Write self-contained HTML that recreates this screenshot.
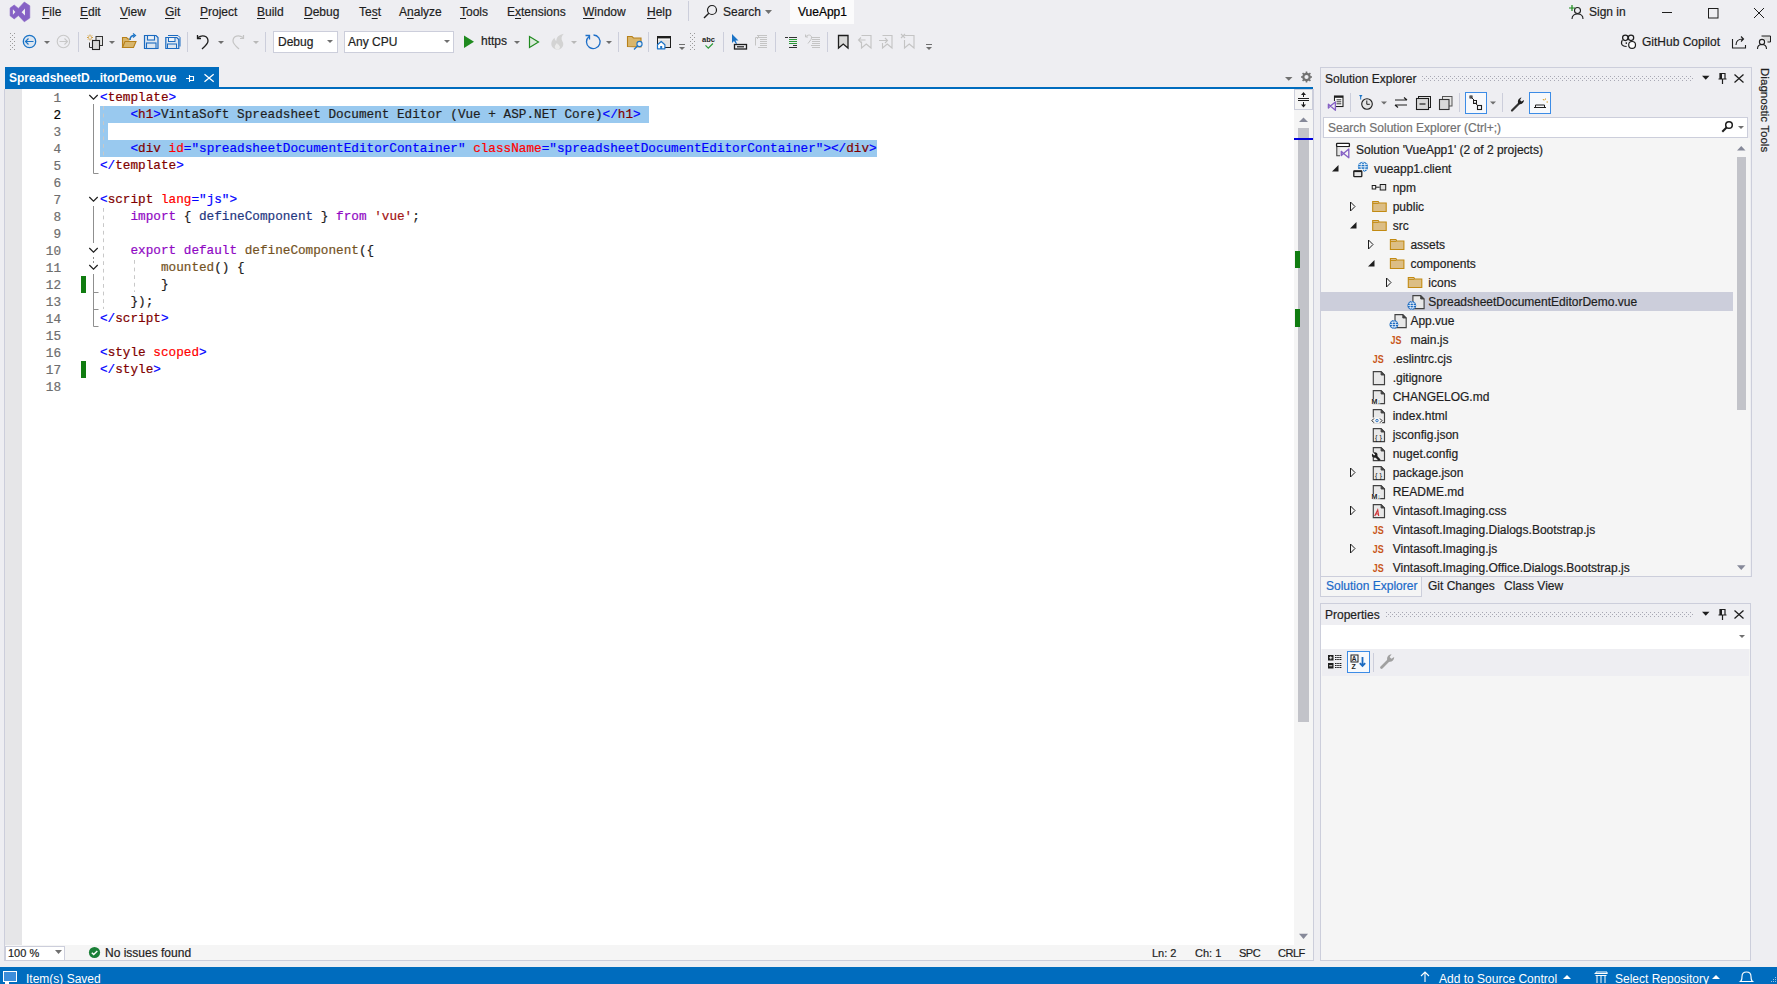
<!DOCTYPE html>
<html><head><meta charset="utf-8"><style>
body{margin:0;width:1777px;height:984px;background:#EEEEF2;position:relative;overflow:hidden;font-family:"Liberation Sans",sans-serif;font-size:12px;color:#1E1E1E;-webkit-text-stroke:0.2px currentColor}
.a{position:absolute}
.m{position:absolute;top:0;height:24px;line-height:24px;white-space:nowrap}
.m u{text-decoration:underline;text-underline-offset:2px}
.sep{position:absolute;width:1px;background:#CCCEDB}
.code{position:absolute;left:0;top:89px;font-family:"Liberation Mono",monospace;font-size:12.69px;line-height:17px;white-space:pre}
.ln{position:absolute;left:22px;width:39px;padding-top:1px;text-align:right;font-family:"Liberation Mono",monospace;font-size:12.69px;line-height:17px;color:#6E6E6E}
.cl{position:absolute;left:100px;height:17px}
.b{color:#0000FF}.t{color:#800000}.r{color:#FF0000}.k{color:#8F08C4}.f{color:#74531F}.v{color:#1F377F}.s{color:#A31515}
.tr{position:absolute;height:19px;line-height:19px;white-space:nowrap}
.st{position:absolute;color:#fff;white-space:nowrap;line-height:17px;-webkit-text-stroke:0}
</style></head><body>

<!-- ============ MENU BAR ============ -->
<div id="menubar">
<svg class="a" style="left:6px;top:0" width="30" height="25" viewBox="0 0 30 25"><path d="M4.1 8.1L8.2 5L12.4 8.4L18.3 2L23.8 5.8V18L18.3 21.8L12.4 15.5L8.2 18.9L4.1 15.8Z" fill="#8661C5" stroke="#8661C5" stroke-width="0.6" stroke-linejoin="round"/><path d="M6.9 9.3L9.4 12L6.9 14.7ZM19 8.6L15.6 12.2L19 15.4Z" fill="#EEEEF2"/></svg>
<div class="m" style="left:42px"><u>F</u>ile</div>
<div class="m" style="left:80px"><u>E</u>dit</div>
<div class="m" style="left:120px"><u>V</u>iew</div>
<div class="m" style="left:165px"><u>G</u>it</div>
<div class="m" style="left:200px"><u>P</u>roject</div>
<div class="m" style="left:257px"><u>B</u>uild</div>
<div class="m" style="left:304px"><u>D</u>ebug</div>
<div class="m" style="left:359px">Te<u>s</u>t</div>
<div class="m" style="left:399px">A<u>n</u>alyze</div>
<div class="m" style="left:460px"><u>T</u>ools</div>
<div class="m" style="left:507px">E<u>x</u>tensions</div>
<div class="m" style="left:583px"><u>W</u>indow</div>
<div class="m" style="left:647px"><u>H</u>elp</div>
<div class="sep" style="left:688px;top:1px;height:20px"></div>
<svg class="a" style="left:703px;top:4px" width="15" height="15" viewBox="0 0 15 15"><circle cx="9" cy="6" r="4.5" fill="none" stroke="#1E1E1E" stroke-width="1.2"/><path d="M5.8 9.2 L1 14" stroke="#1E1E1E" stroke-width="1.4"/></svg>
<div class="m" style="left:723px">Search</div>
<svg class="a" style="left:765px;top:10px" width="7" height="4"><path d="M0 0H7L3.5 4Z" fill="#717171"/></svg>
<div class="a" style="left:790px;top:0;width:64px;height:24px;background:#FBFBFC"></div>
<div class="m" style="left:798px;font-weight:400;color:#000">VueApp1</div>
<svg class="a" style="left:1560px;top:0" width="217" height="24" viewBox="1560 0 217 24"><path d="M1572 5v6M1569 8h6" stroke="#1A8A1A" stroke-width="1.2"/><circle cx="1577.5" cy="10.5" r="3" fill="none" stroke="#1E1E1E" stroke-width="1.1"/><path d="M1572 19c0-3.5 2.5-5 5.5-5s5.5 1.5 5.5 5" fill="none" stroke="#1E1E1E" stroke-width="1.1"/>
<path d="M1662 12.5h10" stroke="#1E1E1E" stroke-width="1"/><rect x="1708.5" y="8.5" width="9.5" height="9.5" fill="none" stroke="#1E1E1E" stroke-width="1"/><path d="M1754 8l10 10M1764 8l-10 10" stroke="#1E1E1E" stroke-width="1"/></svg>
<div class="m" style="left:1589px">Sign in</div>
</div>

<!-- ============ TOOLBAR ============ -->
<div id="toolbar">
<svg class="a" style="left:0;top:0" width="1777" height="60" viewBox="0 0 1777 60">
<g fill="#9A9A9A">
<rect x="10" y="33" width="1" height="1"/><rect x="14" y="33" width="1" height="1"/><rect x="12" y="35" width="1" height="1"/><rect x="10" y="37" width="1" height="1"/><rect x="14" y="37" width="1" height="1"/><rect x="12" y="39" width="1" height="1"/><rect x="10" y="41" width="1" height="1"/><rect x="14" y="41" width="1" height="1"/><rect x="12" y="43" width="1" height="1"/><rect x="10" y="45" width="1" height="1"/><rect x="14" y="45" width="1" height="1"/><rect x="12" y="47" width="1" height="1"/><rect x="10" y="49" width="1" height="1"/><rect x="14" y="49" width="1" height="1"/>
<rect x="690" y="33" width="1" height="1"/><rect x="694" y="33" width="1" height="1"/><rect x="692" y="35" width="1" height="1"/><rect x="690" y="37" width="1" height="1"/><rect x="694" y="37" width="1" height="1"/><rect x="692" y="39" width="1" height="1"/><rect x="690" y="41" width="1" height="1"/><rect x="694" y="41" width="1" height="1"/><rect x="692" y="43" width="1" height="1"/><rect x="690" y="45" width="1" height="1"/><rect x="694" y="45" width="1" height="1"/><rect x="692" y="47" width="1" height="1"/><rect x="690" y="49" width="1" height="1"/><rect x="694" y="49" width="1" height="1"/>
</g>
<!-- separators -->
<g fill="#CCCEDB">
<rect x="78" y="32" width="1" height="20"/><rect x="187" y="32" width="1" height="20"/><rect x="265" y="32" width="1" height="20"/>
<rect x="618" y="32" width="1" height="20"/><rect x="648" y="32" width="1" height="20"/><rect x="723" y="32" width="1" height="20"/><rect x="775" y="32" width="1" height="20"/><rect x="827" y="32" width="1" height="20"/>
</g>
<!-- dropdown arrows -->
<g fill="#6F6F6F">
<path d="M44 41h6l-3 3z"/><path d="M109 41h6l-3 3z"/><path d="M218 41h6l-3 3z"/><path d="M253 41h6l-3 3z" fill="#B8B8B8"/>
<path d="M514 41h6l-3 3z"/><path d="M571 41h6l-3 3z" fill="#B8B8B8"/><path d="M606 41h6l-3 3z"/>
<path d="M679 47h6l-3 3z"/><rect x="679" y="44" width="6" height="1"/>
<path d="M926 47h6l-3 3z"/><rect x="926" y="44" width="6" height="1"/>
</g>
<!-- back -->
<circle cx="29.5" cy="41.5" r="6.2" fill="#DCE6F1" stroke="#1B73C6" stroke-width="1.3"/>
<path d="M25.5 41.5h8M28.5 38.5l-3 3 3 3" fill="none" stroke="#1B73C6" stroke-width="1.2"/>
<circle cx="63.4" cy="41.5" r="6.2" fill="none" stroke="#C8C8C8" stroke-width="1.1"/>
<path d="M59.5 41.5h8M64.5 38.5l3 3-3 3" fill="none" stroke="#C8C8C8" stroke-width="1.1"/>
<!-- new project -->
<path d="M90 34.6v5.8M87.1 37.5h5.8M88 35.5l4 4M92 35.5l-4 4" stroke="#C98A12" stroke-width="0.9"/><circle cx="90" cy="37.5" r="1.3" fill="#EEEEF2"/>
<rect x="96" y="36.5" width="6.5" height="9" fill="#E4E4E4" stroke="#333" stroke-width="1"/>
<rect x="92.5" y="40.5" width="7" height="9" fill="#D8D8D8" stroke="#222" stroke-width="1.1"/>
<path d="M89.5 42.5v5h3" fill="none" stroke="#333" stroke-width="1"/>
<!-- open folder -->
<path d="M122.5 47.5v-10h4l1.5 1.5h3" fill="#D9B66B" stroke="#B7801A" stroke-width="1.1"/>
<path d="M122.5 47.5l2.5-6h11l-2.5 6z" fill="#D9B66B" stroke="#B7801A" stroke-width="1.1"/>
<path d="M130 40c0-3 2-4.5 4.5-4.5" fill="none" stroke="#1B73C6" stroke-width="1.3"/><path d="M133 33.5l2.5 2-2.5 2" fill="none" stroke="#1B73C6" stroke-width="1.2"/>
<!-- save -->
<path d="M144.5 35.5h11.5l2 2v11h-13.5z" fill="#DCE6F1" stroke="#1B6AC0" stroke-width="1.2"/>
<rect x="147.5" y="35.5" width="7" height="4.5" fill="#EEF2F7" stroke="#1B6AC0" stroke-width="1.1"/>
<rect x="146.5" y="43" width="9.5" height="5.5" fill="#DCE6F1" stroke="#1B6AC0" stroke-width="1.1"/>
<!-- save all -->
<path d="M168 35.5h10l2 2v9" fill="none" stroke="#1B6AC0" stroke-width="1"/>
<path d="M165.8 37.5h11l2 2v9h-13z" fill="#DCE6F1" stroke="#1B6AC0" stroke-width="1.2"/>
<rect x="168.5" y="37.5" width="6.5" height="4" fill="#EEF2F7" stroke="#1B6AC0" stroke-width="1"/>
<rect x="167.5" y="44" width="9" height="4.5" fill="#DCE6F1" stroke="#1B6AC0" stroke-width="1"/>
<!-- undo -->
<path d="M198 37.5c4-3 10-2 10 3.5c0 2-2 4.5-6 8" fill="none" stroke="#1E1E1E" stroke-width="1.3"/><path d="M197.5 35v3.5h3.5" fill="none" stroke="#1E1E1E" stroke-width="1.3"/>
<path d="M243 37.5c-4-3-10-2-10 3.5c0 2 2 4.5 6 8" fill="none" stroke="#C4C4C4" stroke-width="1.2"/><path d="M243.5 35v3.5h-3.5" fill="none" stroke="#C4C4C4" stroke-width="1.2"/>
<!-- play -->
<path d="M464 35.5v12.5l10-6.25z" fill="#1F8A1F"/>
<path d="M529.5 36.5v11l9-5.5z" fill="#DCEBDC" stroke="#1F8A1F" stroke-width="1.2"/>
<!-- flame -->
<path d="M557.5 49.6c-3.6 0-6.2-2.6-6.2-5.8c0-2.6 1.6-4.4 3.2-6c0.2 1.6 0.8 2.6 1.8 3.2c0-3.6 2.6-6.4 7.6-7.2c-1.8 1.6-2.6 3.6-2.2 5.6c0.3 1.6 1.6 2.6 1.6 4.6c0 3-2.4 5.6-5.8 5.6z" fill="#D3D3D3"/><path d="M557.8 49.6c-1.8 0-3-1.3-3-2.9c0-1.7 1.4-2.6 2.2-3.8c0.4 1 1 1.6 1.8 1.8c0.2 0.9 1.2 1.4 1.2 2.3c0 1.5-1 2.6-2.2 2.6z" fill="#EBEBEB"/>
<!-- refresh -->
<path d="M589 36.5a6.8 6.8 0 1 0 4.5-1.5" fill="none" stroke="#1E6FC8" stroke-width="1.3"/><path d="M585.5 35.5h4v4" fill="none" stroke="#1E6FC8" stroke-width="1.3"/>
<!-- folder search -->
<path d="M627.5 46.5v-10h4.5l1.5 1.5h7.5v9z" fill="#D9B66B" stroke="#B7801A" stroke-width="1.1"/>
<circle cx="639.5" cy="44" r="2.6" fill="#E6EEF6" stroke="#1B73C6" stroke-width="1.1"/><path d="M637.5 46l-3.5 3.5" stroke="#1B73C6" stroke-width="1.3"/>
<!-- window home -->
<rect x="657.5" y="36.5" width="13" height="11" fill="#E2E2E2" stroke="#1E1E1E" stroke-width="1"/><rect x="658" y="37" width="12" height="1.6" fill="#1E1E1E"/><rect x="658" y="38.6" width="12" height="1.4" fill="#F2F2F2"/>
<path d="M657.5 44.8l3.7-3.3 3.7 3.3v4h-7.4z" fill="#fff" stroke="#1B73C6" stroke-width="1.2" stroke-linejoin="round"/><rect x="660.2" y="46" width="2" height="2.8" fill="#1B73C6"/>
<!-- abc -->
<text x="702" y="41.5" font-family="Liberation Sans" font-size="7.6" font-weight="700" fill="#1E1E1E" textLength="13" lengthAdjust="spacingAndGlyphs">abc</text>
<path d="M705.5 45.3l2.8 2.8 4.6-4.6" fill="none" stroke="#2E9A3A" stroke-width="1.2"/>
<!-- cursor select -->
<path d="M732 34v9l2-2 2 3 1-0.5-1.5-3h3z" fill="#1B73C6"/>
<rect x="734.5" y="44.5" width="12" height="4.5" fill="none" stroke="#1E1E1E" stroke-width="1.3"/><rect x="737" y="46.2" width="7" height="1.2" fill="#1E1E1E"/>
<!-- gray indent -->
<g stroke="#C4C4C4" stroke-width="1"><path d="M758 35.5h9M758 37.5h9M760 39.5h7M760 41.5h7M760 43.5h7M760 45.5h7M758 47.5h9"/><path d="M755.5 45.5v-8h3.5M757 35l2 2-2 2" fill="none"/></g>
<!-- green indent -->
<g stroke-width="1.1"><path d="M785 37.5h3M789 37.5h8" stroke="#333"/><path d="M789 39.5h8M789 41.5h8M789 43.5h8" stroke="#2E9A3A"/><path d="M793 45.5h4M789 47.5h8" stroke="#333"/></g>
<g stroke="#C4C4C4" stroke-width="1"><path d="M812 37.5h8M812 39.5h8M812 41.5h8M812 43.5h8M811 45.5h9M812 47.5h8"/><path d="M806 36.5c3-3 7-1 5 3l-3 4M805.5 34.5v2.5h2.5" fill="none"/></g>
<!-- bookmarks -->
<path d="M838.5 35.5h9.5v12.5l-4.75-4-4.75 4z" fill="#D9D9D9" stroke="#1E1E1E" stroke-width="1.3"/>
<g fill="none" stroke="#C4C4C4" stroke-width="1.1"><path d="M861.5 35.5h9.5v12.5l-4.75-4-4.75 4v-6.5M858.5 40h7M861 37.5l-2.5 2.5 2.5 2.5"/>
<path d="M882.5 35.5h9.5v12.5l-4.75-4-4.75 4v-5M879 40.5h8M885 38l2.5 2.5-2.5 2.5"/>
<path d="M904.5 35.5h9.5v12.5l-4.75-4-4.75 4v-8M901 34l4 4M905 34l-4 4"/></g>
<!-- copilot -->
<g fill="none" stroke="#1E1E1E" stroke-width="1.25"><circle cx="1625.3" cy="37.8" r="2.7"/><circle cx="1631" cy="37.8" r="2.7"/><path d="M1622.4 40.2c-1.3 1.8-1.4 4.6 0.8 5.6c1 0.5 2.2 0.6 3.4 0.7M1626.3 42.3v1.6"/></g>
<circle cx="1632.1" cy="44.9" r="3.4" fill="#fff" stroke="#1E1E1E" stroke-width="1.2"/>
<!-- share -->
<path d="M1732.5 39v9h13v-3" fill="none" stroke="#1E1E1E" stroke-width="1.1"/><path d="M1736 45c0-4 3-6 7-6M1741 36.5l2.5 2.5-2.5 2.5" fill="none" stroke="#1E1E1E" stroke-width="1.1"/>
<!-- feedback -->
<path d="M1761.5 36h9v6h-3" fill="#DADADA" stroke="#1E1E1E" stroke-width="1"/><circle cx="1762" cy="42" r="2.6" fill="#EEEEF2" stroke="#1E1E1E" stroke-width="1.1"/><path d="M1757.5 49c0-3 2-4.5 4.5-4.5s4.5 1.5 4.5 4.5" fill="none" stroke="#1E1E1E" stroke-width="1.1"/>
</svg>
<div class="a" style="left:273px;top:31px;width:63px;height:20px;background:#fff;border:1px solid #CCCEDB"></div>
<div class="a" style="left:278px;top:32px;line-height:20px">Debug</div>
<svg class="a" style="left:327px;top:40px" width="6" height="3"><path d="M0 0h6l-3 3z" fill="#6F6F6F"/></svg>
<div class="a" style="left:344px;top:31px;width:108px;height:20px;background:#fff;border:1px solid #CCCEDB"></div>
<div class="a" style="left:348px;top:32px;line-height:20px">Any CPU</div>
<svg class="a" style="left:444px;top:40px" width="6" height="3"><path d="M0 0h6l-3 3z" fill="#6F6F6F"/></svg>
<div class="a" style="left:481px;top:31px;line-height:20px">https</div>
<div class="a" style="left:1642px;top:32px;line-height:20px;white-space:nowrap">GitHub Copilot</div>

</div>

<!-- ============ EDITOR ============ -->
<div id="editor">
<div class="a" style="left:5px;top:67px;width:214px;height:22px;background:#006CBE"></div>
<div class="a" style="left:5px;top:87px;width:1308px;height:2px;background:#006CBE"></div>
<div class="a" style="left:9px;top:68px;height:21px;line-height:21px;color:#fff;font-weight:700;white-space:nowrap;-webkit-text-stroke:0">SpreadsheetD...itorDemo.vue</div>
<div class="a" style="left:4px;top:89px;width:1310px;height:872px;border:1px solid #CCCEDB;border-top:none;box-sizing:border-box;background:#F5F5F5"></div>
<div class="a" style="left:5px;top:89px;width:1289px;height:856px;background:#fff"></div>
<div class="a" style="left:5px;top:89px;width:17px;height:856px;background:#E6E6E8"></div>
<svg class="a" style="left:180px;top:67px" width="40" height="20" viewBox="180 67 40 20"><path d="M186 78.5h3.5M189.5 75v7M189.5 76.5h4v4h-4" fill="none" stroke="#fff" stroke-width="1.1"/><path d="M204.5 74.2l9.2 7.6M213.7 74.2l-9.2 7.6" stroke="#fff" stroke-width="1.3"/></svg>
<svg class="a" style="left:1280px;top:68px" width="34" height="18" viewBox="1280 68 34 18"><path d="M1285 77h7.5l-3.75 3.8z" fill="#717171"/><circle cx="1306.5" cy="77" r="3.2" fill="none" stroke="#717171" stroke-width="2.2"/><path d="M1306.5 71.5v2M1306.5 80.5v2M1301 77h2M1310 77h2M1302.6 73.1l1.4 1.4M1309 79.5l1.4 1.4M1302.6 80.9l1.4-1.4M1309 74.5l1.4-1.4" stroke="#717171" stroke-width="1.6"/><circle cx="1306.5" cy="77" r="1.2" fill="#EEEEF2"/></svg>
<div class="a" style="left:1294px;top:89px;width:19px;height:21px;border:1px solid #CCCEDB;box-sizing:border-box;background:#F5F5F5"></div>
<svg class="a" style="left:1294px;top:89px" width="20" height="860" viewBox="1294 89 20 860"><path d="M1298 100.5h11M1298 98.5h11" stroke="#1E1E1E" stroke-width="1.1"/><path d="M1303.5 94v3M1303.5 102v3" stroke="#1E1E1E" stroke-width="1"/><path d="M1301 95l2.5-3 2.5 3zM1301 104.5l2.5 3 2.5-3z" fill="#1E1E1E"/>
<path d="M1299 122h9l-4.5-4.6z" fill="#868999"/><rect x="1298" y="128" width="11" height="594" fill="#C2C3C9"/><path d="M1299 933.7h9l-4.5 5.2z" fill="#868999"/>
<rect x="1294" y="138" width="19" height="2" fill="#0000DD"/><rect x="1295" y="251" width="5" height="17" fill="#107C10"/><rect x="1295" y="309" width="5" height="18" fill="#107C10"/></svg>
<div class="a" style="left:5px;top:946px;width:58px;height:13px;background:#fff;border:1px solid #CCCEDB"></div>
<div class="a" style="left:8px;top:946px;line-height:15px;font-size:11px;white-space:nowrap">100 %</div>
<svg class="a" style="left:55px;top:950px" width="7" height="4"><path d="M0 0h7l-3.5 4z" fill="#6F6F6F"/></svg>
<svg class="a" style="left:88px;top:946px" width="13" height="13" viewBox="0 0 13 13"><circle cx="6.5" cy="6.5" r="5.6" fill="#1A7F37"/><path d="M3.8 6.7l1.9 1.9 3.6-3.6" fill="none" stroke="#fff" stroke-width="1.4"/></svg>
<div class="a" style="left:105px;top:946px;line-height:15px;white-space:nowrap">No issues found</div>
<div class="a" style="left:1152px;top:946px;line-height:15px;font-size:11px;white-space:nowrap">Ln: 2</div>
<div class="a" style="left:1195px;top:946px;line-height:15px;font-size:11px;white-space:nowrap">Ch: 1</div>
<div class="a" style="left:1239px;top:946px;line-height:15px;font-size:11px;letter-spacing:-0.5px;white-space:nowrap">SPC</div>
<div class="a" style="left:1278px;top:946px;line-height:15px;font-size:11px;letter-spacing:-0.5px;white-space:nowrap">CRLF</div>
<div class="a" style="left:100px;top:106px;width:549px;height:17px;background:#99C9EF"></div>
<div class="a" style="left:100px;top:123px;width:8px;height:17px;background:#99C9EF"></div>
<div class="a" style="left:100px;top:140px;width:777px;height:17px;background:#99C9EF"></div>
<div class="ln" style="top:89px;color:#6E6E6E">1</div>
<div class="ln" style="top:106px;color:#000">2</div>
<div class="ln" style="top:123px;color:#6E6E6E">3</div>
<div class="ln" style="top:140px;color:#6E6E6E">4</div>
<div class="ln" style="top:157px;color:#6E6E6E">5</div>
<div class="ln" style="top:174px;color:#6E6E6E">6</div>
<div class="ln" style="top:191px;color:#6E6E6E">7</div>
<div class="ln" style="top:208px;color:#6E6E6E">8</div>
<div class="ln" style="top:225px;color:#6E6E6E">9</div>
<div class="ln" style="top:242px;color:#6E6E6E">10</div>
<div class="ln" style="top:259px;color:#6E6E6E">11</div>
<div class="ln" style="top:276px;color:#6E6E6E">12</div>
<div class="ln" style="top:293px;color:#6E6E6E">13</div>
<div class="ln" style="top:310px;color:#6E6E6E">14</div>
<div class="ln" style="top:327px;color:#6E6E6E">15</div>
<div class="ln" style="top:344px;color:#6E6E6E">16</div>
<div class="ln" style="top:361px;color:#6E6E6E">17</div>
<div class="ln" style="top:378px;color:#6E6E6E">18</div>
<div class="cl code" style="left:100px;top:89px"><span class="b">&lt;</span><span class="t">template</span><span class="b">&gt;</span></div>
<div class="cl code" style="left:100px;top:106px">    <span class="b">&lt;</span><span class="t">h1</span><span class="b">&gt;</span>VintaSoft Spreadsheet Document Editor (Vue + ASP.NET Core)<span class="b">&lt;/</span><span class="t">h1</span><span class="b">&gt;</span></div>
<div class="cl code" style="left:100px;top:123px"></div>
<div class="cl code" style="left:100px;top:140px">    <span class="b">&lt;</span><span class="t">div</span> <span class="r">id</span><span class="b">="spreadsheetDocumentEditorContainer"</span> <span class="r">className</span><span class="b">="spreadsheetDocumentEditorContainer"</span><span class="b">&gt;&lt;/</span><span class="t">div</span><span class="b">&gt;</span></div>
<div class="cl code" style="left:100px;top:157px"><span class="b">&lt;/</span><span class="t">template</span><span class="b">&gt;</span></div>
<div class="cl code" style="left:100px;top:174px"></div>
<div class="cl code" style="left:100px;top:191px"><span class="b">&lt;</span><span class="t">script</span> <span class="r">lang</span><span class="b">="js"</span><span class="b">&gt;</span></div>
<div class="cl code" style="left:100px;top:208px">    <span class="k">import</span> { <span class="v">defineComponent</span> } <span class="k">from</span> <span class="s">'vue'</span>;</div>
<div class="cl code" style="left:100px;top:225px"></div>
<div class="cl code" style="left:100px;top:242px">    <span class="k">export</span> <span class="k">default</span> <span class="f">defineComponent</span>({</div>
<div class="cl code" style="left:100px;top:259px">        <span class="f">mounted</span>() {</div>
<div class="cl code" style="left:100px;top:276px">        }</div>
<div class="cl code" style="left:100px;top:293px">    });</div>
<div class="cl code" style="left:100px;top:310px"><span class="b">&lt;/</span><span class="t">script</span><span class="b">&gt;</span></div>
<div class="cl code" style="left:100px;top:327px"></div>
<div class="cl code" style="left:100px;top:344px"><span class="b">&lt;</span><span class="t">style</span> <span class="r">scoped</span><span class="b">&gt;</span></div>
<div class="cl code" style="left:100px;top:361px"><span class="b">&lt;/</span><span class="t">style</span><span class="b">&gt;</span></div>
<div class="cl code" style="left:100px;top:378px"></div>
<div class="a" style="left:81px;top:276px;width:5px;height:17px;background:#107C10"></div>
<div class="a" style="left:81px;top:361px;width:5px;height:17px;background:#107C10"></div>
<svg class="a" style="left:0;top:0" width="200" height="400" viewBox="0 0 200 400"><path d="M89.3 95l4.2 4.2 4.2-4.2" fill="none" stroke="#1E1E1E" stroke-width="1.2"/><path d="M89.3 197l4.2 4.2 4.2-4.2" fill="none" stroke="#1E1E1E" stroke-width="1.2"/><path d="M89.3 248l4.2 4.2 4.2-4.2" fill="none" stroke="#1E1E1E" stroke-width="1.2"/><path d="M89.3 265l4.2 4.2 4.2-4.2" fill="none" stroke="#1E1E1E" stroke-width="1.2"/><path d="M93.5 104v69.5h5" fill="none" stroke="#8F8F8F" stroke-width="1"/><path d="M93.5 206v37" fill="none" stroke="#8F8F8F" stroke-width="1"/><path d="M93.5 257v6" fill="none" stroke="#8F8F8F" stroke-width="1" stroke-dasharray="2 2"/><path d="M93.5 274v52.5h5M93.5 292.5h5M93.5 309.5h5" fill="none" stroke="#8F8F8F" stroke-width="1"/><path d="M103.5 106v51M103.5 208v101M134.5 260v32" fill="none" stroke="#C8C8C8" stroke-width="1" stroke-dasharray="3.8 3.8"/></svg>
</div>

<!-- ============ SOLUTION EXPLORER ============ -->
<div id="se">
<div class="a" style="left:1320px;top:67px;width:430px;height:509px;border:1px solid #CCCEDB;border-bottom:none;background:#EEEEF2"></div>
<div class="a" style="left:1321px;top:138px;width:429px;height:438px;background:#F5F5F5"></div>
<div class="a" style="left:1320px;top:576px;width:431px;height:1px;background:#CCCEDB"></div>
<div class="a" style="left:1325px;top:69px;line-height:21px;white-space:nowrap">Solution Explorer</div>
<svg class="a" style="left:1422px;top:76px" width="272" height="5"><defs><pattern id="gp" width="4" height="4" patternUnits="userSpaceOnUse"><rect x="0" y="0" width="1" height="1" fill="#A8A8B4"/><rect x="2" y="2" width="1" height="1" fill="#A8A8B4"/></pattern></defs><rect width="272" height="5" fill="url(#gp)"/></svg>
<svg class="a" style="left:1700px;top:70px" width="50" height="16" viewBox="1700 70 50 16"><path d="M1702 75.7h7.5l-3.75 4z" fill="#1E1E1E"/><path d="M1720 73.5h5v5.5h-5zM1718.5 79h8M1722.5 79v5" fill="none" stroke="#1E1E1E" stroke-width="1.2"/><rect x="1720" y="73.5" width="2" height="5.5" fill="#1E1E1E"/><path d="M1734.5 74.5l9 8M1743.5 74.5l-9 8" stroke="#1E1E1E" stroke-width="1.3"/></svg>
<svg class="a" style="left:1320px;top:88px" width="240" height="30" viewBox="1320 88 240 30"><rect x="1465.5" y="92.5" width="21" height="21" fill="#F7F9FC" stroke="#3C8CE6" stroke-width="1"/><rect x="1529.5" y="92.5" width="21" height="21" fill="#F7F9FC" stroke="#3C8CE6" stroke-width="1"/><rect x="1350" y="93" width="1" height="19" fill="#CCCEDB"/><rect x="1459" y="93" width="1" height="19" fill="#CCCEDB"/><rect x="1502" y="93" width="1" height="19" fill="#CCCEDB"/><rect x="1334.5" y="96" width="8.5" height="10.5" fill="#fff" stroke="#1E1E1E" stroke-width="1.1"/><rect x="1334.5" y="96" width="8.5" height="1.8" fill="#1E1E1E"/><path d="M1336.5 99.8h4.8M1336.5 101.8h4.8M1336.5 103.8h4.8" stroke="#1E1E1E" stroke-width="0.9"/><rect x="1327" y="101" width="9" height="10" fill="#EEEEF2"/><path d="M1328.4 104.2l2 1.9 5-4.2v8.3l-5-4.1-2 1.9z" fill="none" stroke="#8661C5" stroke-width="1.35" stroke-linejoin="round"/><path d="M1359 95h3.5l-1.75 2.5z" fill="#1B73C6"/><path d="M1360.7 96.5v3" stroke="#1B73C6" stroke-width="1"/><circle cx="1367" cy="104" r="5.3" fill="#E6E6E6" stroke="#1E1E1E" stroke-width="1.1"/><path d="M1366.8 100.5v3.8h3" fill="none" stroke="#1E1E1E" stroke-width="1"/><path d="M1381 101.5h6l-3 3z" fill="#6F6F6F"/><path d="M1395 100h12M1404 97.5l3 2.5M1407 105h-12M1398 107.5l-3-2.5" fill="none" stroke="#1E1E1E" stroke-width="1.2"/><rect x="1418.5" y="96.5" width="12" height="11" fill="#E6E6E6" stroke="#1E1E1E" stroke-width="1"/><rect x="1416.5" y="98.5" width="12" height="11" fill="#D9D9D9" stroke="#1E1E1E" stroke-width="1.1"/><path d="M1419.5 104h6" stroke="#1E1E1E" stroke-width="1.2"/><rect x="1442.5" y="96.5" width="9.5" height="9.5" fill="#E6E6E6" stroke="#555" stroke-width="1"/><rect x="1439.5" y="99.5" width="9.5" height="10" fill="#D9D9D9" stroke="#333" stroke-width="1.1"/><path d="M1471.5 97.5l3 3M1475 102.5l2.5 3" stroke="#1E1E1E" stroke-width="1"/><rect x="1470" y="96" width="2" height="2" fill="none" stroke="#1E1E1E" stroke-width="1"/><rect x="1473.5" y="100.5" width="3" height="3" fill="none" stroke="#1E1E1E" stroke-width="1"/><rect x="1477.5" y="105.5" width="4" height="4" fill="none" stroke="#1E1E1E" stroke-width="1.1"/><path d="M1490 101.5h6l-3 3z" fill="#6F6F6F"/><path d="M1512 110.5l7-7" stroke="#333" stroke-width="2.2" stroke-linecap="round"/><path d="M1518.5 104c-1.5-2.5 0-6 3-6.5l-1.5 2.5 1.5 1.5 2.5-1.5c0 3-3 5-5.5 4z" fill="#1E1E1E"/><path d="M1534 107.5h12M1535.5 107.5v-2.5h9v2.5" fill="none" stroke="#1E1E1E" stroke-width="1"/><path d="M1543 99l1 1.5M1546.5 102h1.5M1545.5 98.5l-0.5 1.5" stroke="#D89A1A" stroke-width="1"/></svg>
<div class="a" style="left:1323px;top:117px;width:423px;height:19px;background:#fff;border:1px solid #CCCEDB"></div>
<div class="a" style="left:1328px;top:119px;line-height:19px;color:#717171;white-space:nowrap">Search Solution Explorer (Ctrl+;)</div>
<svg class="a" style="left:1718px;top:119px" width="30" height="16" viewBox="1718 119 30 16"><circle cx="1729" cy="125" r="3.3" fill="none" stroke="#1E1E1E" stroke-width="1.5"/><path d="M1726.8 127.3l-4.5 4.5" stroke="#1E1E1E" stroke-width="2"/><path d="M1738 126h6l-3 3z" fill="#6F6F6F"/></svg>
<svg class="a" style="left:1735px;top:140px" width="14" height="436" viewBox="1735 140 14 436"><path d="M1737 150.5h8.5l-4.25-4.5z" fill="#868999"/><rect x="1737" y="157" width="9" height="253" fill="#C2C3C9"/><path d="M1737 565.2h8.5l-4.25 4.8z" fill="#868999"/></svg>
<div class="a" style="left:1321px;top:292px;width:412px;height:19px;background:#CCCEDB"></div>
<div class="tr" style="left:1356px;top:141px">Solution &#39;VueApp1&#39; (2 of 2 projects)</div>
<div class="tr" style="left:1374px;top:160px">vueapp1.client</div>
<div class="tr" style="left:1392.7px;top:179px">npm</div>
<div class="tr" style="left:1392.7px;top:198px">public</div>
<div class="tr" style="left:1392.7px;top:217px">src</div>
<div class="tr" style="left:1410.4px;top:236px">assets</div>
<div class="tr" style="left:1410.4px;top:255px">components</div>
<div class="tr" style="left:1428.3px;top:274px">icons</div>
<div class="tr" style="left:1428.3px;top:293px">SpreadsheetDocumentEditorDemo.vue</div>
<div class="tr" style="left:1410.4px;top:312px">App.vue</div>
<div class="tr" style="left:1410.4px;top:331px">main.js</div>
<div class="tr" style="left:1392.7px;top:350px">.eslintrc.cjs</div>
<div class="tr" style="left:1392.7px;top:369px">.gitignore</div>
<div class="tr" style="left:1392.7px;top:388px">CHANGELOG.md</div>
<div class="tr" style="left:1392.7px;top:407px">index.html</div>
<div class="tr" style="left:1392.7px;top:426px">jsconfig.json</div>
<div class="tr" style="left:1392.7px;top:445px">nuget.config</div>
<div class="tr" style="left:1392.7px;top:464px">package.json</div>
<div class="tr" style="left:1392.7px;top:483px">README.md</div>
<div class="tr" style="left:1392.7px;top:502px">Vintasoft.Imaging.css</div>
<div class="tr" style="left:1392.7px;top:521px">Vintasoft.Imaging.Dialogs.Bootstrap.js</div>
<div class="tr" style="left:1392.7px;top:540px">Vintasoft.Imaging.js</div>
<div class="tr" style="left:1392.7px;top:559px">Vintasoft.Imaging.Office.Dialogs.Bootstrap.js</div>
<svg class="a" style="left:1320px;top:138px" width="420" height="440" viewBox="1320 138 420 440"><rect x="1336.6" y="143.3" width="12.8" height="3.4" rx="0.8" fill="#fff" stroke="#1E1E1E" stroke-width="1.3"/><rect x="1337.2" y="147.0" width="11.6" height="8.4" fill="#E6E6E6"/><path d="M1336.8 146.7v9h3.2" fill="none" stroke="#424242" stroke-width="1.1"/><rect x="1340.2" y="148.1" width="10" height="9.4" fill="#F5F5F5"/><path d="M1341.3 151.3l2.2 2.1 5.3-4.5v8.8l-5.3-4.3-2.2 2.1z" fill="none" stroke="#8661C5" stroke-width="1.35" stroke-linejoin="round"/><path d="M1332 171.5h6.5v-6.5z" fill="#1E1E1E"/><circle cx="1363" cy="166.8" r="5.1" fill="#1B73C6"/><path d="M1358.3 166.8h9.4M1359 164.3h8M1359 169.3h8" stroke="#fff" stroke-width="0.9"/><ellipse cx="1363" cy="166.8" rx="2" ry="5" fill="none" stroke="#fff" stroke-width="0.8"/><rect x="1352.4" y="169.1" width="10.6" height="8.4" fill="#F5F5F5"/><rect x="1353.8" y="170.8" width="8" height="5.8" rx="0.6" fill="#E6E6E6" stroke="#1E1E1E" stroke-width="1.3"/><rect x="1353.8" y="170.6" width="8" height="1.5" fill="#1E1E1E"/><rect x="1372.2" y="185.5" width="3.5" height="3.5" fill="none" stroke="#1E1E1E" stroke-width="1"/><path d="M1375.7 187.2h4" stroke="#1E1E1E" stroke-width="1"/><rect x="1380.2" y="184.5" width="5.5" height="5.5" fill="#E0E0E0" stroke="#1E1E1E" stroke-width="1"/><path d="M1350.5 202.0l4.5 4.5-4.5 4.5z" fill="none" stroke="#1E1E1E" stroke-width="1"/><path d="M1372.7 201.5h5.5l1 1.5h7v8.5h-13.5z" fill="#DCBE85" stroke="#C28A12" stroke-width="1.1"/><path d="M1372.7 203.5h6" stroke="#C28A12" stroke-width="0.9"/><path d="M1350 228.5h6.5v-6.5z" fill="#1E1E1E"/><path d="M1372.7 220.5h5.5l1 1.5h7v8.5h-13.5z" fill="#DCBE85" stroke="#C28A12" stroke-width="1.1"/><path d="M1372.7 222.5h6" stroke="#C28A12" stroke-width="0.9"/><path d="M1368.5 240.0l4.5 4.5-4.5 4.5z" fill="none" stroke="#1E1E1E" stroke-width="1"/><path d="M1390.4 239.5h5.5l1 1.5h7v8.5h-13.5z" fill="#DCBE85" stroke="#C28A12" stroke-width="1.1"/><path d="M1390.4 241.5h6" stroke="#C28A12" stroke-width="0.9"/><path d="M1368 266.5h6.5v-6.5z" fill="#1E1E1E"/><path d="M1390.4 258.5h5.5l1 1.5h7v8.5h-13.5z" fill="#DCBE85" stroke="#C28A12" stroke-width="1.1"/><path d="M1390.4 260.5h6" stroke="#C28A12" stroke-width="0.9"/><path d="M1386.5 278.0l4.5 4.5-4.5 4.5z" fill="none" stroke="#1E1E1E" stroke-width="1"/><path d="M1408.3 277.5h5.5l1 1.5h7v8.5h-13.5z" fill="#DCBE85" stroke="#C28A12" stroke-width="1.1"/><path d="M1408.3 279.5h6" stroke="#C28A12" stroke-width="0.9"/><path d="M1412.8999999999999 295.6h7.8l3.4 3.4v9.6h-11.2z" fill="#E8E8E8" stroke="#424242" stroke-width="1.15" stroke-linejoin="miter"/><path d="M1420.6999999999998 295.6v3.4h3.4z" fill="#424242" stroke="#424242" stroke-width="0.9"/><circle cx="1411.8" cy="305.5" r="4.4" fill="#1B6AC0"/><path d="M1407.8 305.5h8M1408.8 303.3h6M1408.8 307.7h6" stroke="#fff" stroke-width="0.7"/><ellipse cx="1411.8" cy="305.5" rx="1.7" ry="3.8" fill="none" stroke="#fff" stroke-width="0.7"/><path d="M1395.0 314.6h7.8l3.4 3.4v9.6h-11.2z" fill="#E8E8E8" stroke="#424242" stroke-width="1.15" stroke-linejoin="miter"/><path d="M1402.8 314.6v3.4h3.4z" fill="#424242" stroke="#424242" stroke-width="0.9"/><circle cx="1393.9" cy="324.5" r="4.4" fill="#1B6AC0"/><path d="M1389.9 324.5h8M1390.9 322.3h6M1390.9 326.7h6" stroke="#fff" stroke-width="0.7"/><ellipse cx="1393.9" cy="324.5" rx="1.7" ry="3.8" fill="none" stroke="#fff" stroke-width="0.7"/><text x="1390.4" y="343.5" font-family="Liberation Sans" font-size="11" font-weight="700" fill="#C8571A" textLength="11" lengthAdjust="spacingAndGlyphs">JS</text><text x="1372.7" y="362.5" font-family="Liberation Sans" font-size="11" font-weight="700" fill="#C8571A" textLength="11" lengthAdjust="spacingAndGlyphs">JS</text><path d="M1373.3 371.6h7.8l3.4 3.4v9.6h-11.2z" fill="#E8E8E8" stroke="#424242" stroke-width="1.15" stroke-linejoin="miter"/><path d="M1381.1 371.6v3.4h3.4z" fill="#424242" stroke="#424242" stroke-width="0.9"/><path d="M1373.3 390.6h7.8l3.4 3.4v9.6h-11.2z" fill="#E8E8E8" stroke="#424242" stroke-width="1.15" stroke-linejoin="miter"/><path d="M1381.1 390.6v3.4h3.4z" fill="#424242" stroke="#424242" stroke-width="0.9"/><rect x="1371.2" y="399.0" width="9" height="5.5" fill="#F5F5F5"/><text x="1371.4" y="404.1" font-family="Liberation Sans" font-size="7" font-weight="700" fill="#1E1E1E" textLength="9.5" lengthAdjust="spacingAndGlyphs">M↓</text><path d="M1373.3 409.6h7.8l3.4 3.4v9.6h-11.2z" fill="#E8E8E8" stroke="#424242" stroke-width="1.15" stroke-linejoin="miter"/><path d="M1381.1 409.6v3.4h3.4z" fill="#424242" stroke="#424242" stroke-width="0.9"/><rect x="1371.2" y="417.5" width="11" height="6" fill="#F5F5F5"/><path d="M1373.9 418.5l-2 2.1 2 2.1M1380.0 418.5l2 2.1-2 2.1" fill="none" stroke="#1E1E1E" stroke-width="1"/><circle cx="1377.0" cy="420.6" r="1.2" fill="none" stroke="#1B6AC0" stroke-width="0.9"/><path d="M1373.3 428.6h7.8l3.4 3.4v9.6h-11.2z" fill="#E8E8E8" stroke="#424242" stroke-width="1.15" stroke-linejoin="miter"/><path d="M1381.1 428.6v3.4h3.4z" fill="#424242" stroke="#424242" stroke-width="0.9"/><text x="1375.0" y="439.5" font-family="Liberation Sans" font-size="7.5" fill="#1E1E1E" textLength="7" lengthAdjust="spacingAndGlyphs">{ }</text><path d="M1373.3 447.6h7.8l3.4 3.4v9.6h-11.2z" fill="#E8E8E8" stroke="#424242" stroke-width="1.15" stroke-linejoin="miter"/><path d="M1381.1 447.6v3.4h3.4z" fill="#424242" stroke="#424242" stroke-width="0.9"/><path d="M1375.2 455.5l4.5 4.8" stroke="#1E1E1E" stroke-width="2.4"/><circle cx="1374.7" cy="455.0" r="2.8" fill="#1E1E1E"/><path d="M1372.2 452.5l2.5 2.5" stroke="#F5F5F5" stroke-width="1.6"/><path d="M1350.5 468.0l4.5 4.5-4.5 4.5z" fill="none" stroke="#1E1E1E" stroke-width="1"/><path d="M1373.3 466.6h7.8l3.4 3.4v9.6h-11.2z" fill="#E8E8E8" stroke="#424242" stroke-width="1.15" stroke-linejoin="miter"/><path d="M1381.1 466.6v3.4h3.4z" fill="#424242" stroke="#424242" stroke-width="0.9"/><text x="1375.0" y="477.5" font-family="Liberation Sans" font-size="7.5" fill="#1E1E1E" textLength="7" lengthAdjust="spacingAndGlyphs">{ }</text><path d="M1373.3 485.6h7.8l3.4 3.4v9.6h-11.2z" fill="#E8E8E8" stroke="#424242" stroke-width="1.15" stroke-linejoin="miter"/><path d="M1381.1 485.6v3.4h3.4z" fill="#424242" stroke="#424242" stroke-width="0.9"/><rect x="1371.2" y="494.0" width="9" height="5.5" fill="#F5F5F5"/><text x="1371.4" y="499.1" font-family="Liberation Sans" font-size="7" font-weight="700" fill="#1E1E1E" textLength="9.5" lengthAdjust="spacingAndGlyphs">M↓</text><path d="M1350.5 506.0l4.5 4.5-4.5 4.5z" fill="none" stroke="#1E1E1E" stroke-width="1"/><path d="M1373.3 504.6h7.8l3.4 3.4v9.6h-11.2z" fill="#E8E8E8" stroke="#424242" stroke-width="1.15" stroke-linejoin="miter"/><path d="M1381.1 504.6v3.4h3.4z" fill="#424242" stroke="#424242" stroke-width="0.9"/><path d="M1374.7 516.0l3-6 1 6M1375.7 514.0h3" fill="none" stroke="#D13438" stroke-width="1.2"/><text x="1372.7" y="533.5" font-family="Liberation Sans" font-size="11" font-weight="700" fill="#C8571A" textLength="11" lengthAdjust="spacingAndGlyphs">JS</text><path d="M1350.5 544.0l4.5 4.5-4.5 4.5z" fill="none" stroke="#1E1E1E" stroke-width="1"/><text x="1372.7" y="552.5" font-family="Liberation Sans" font-size="11" font-weight="700" fill="#C8571A" textLength="11" lengthAdjust="spacingAndGlyphs">JS</text><text x="1372.7" y="571.5" font-family="Liberation Sans" font-size="11" font-weight="700" fill="#C8571A" textLength="11" lengthAdjust="spacingAndGlyphs">JS</text></svg>
<div class="a" style="left:1320px;top:577px;width:100px;height:19px;background:#F5F5F5;border:1px solid #CCCEDB;border-top:none"></div>
<div class="a" style="left:1326px;top:577px;line-height:18px;color:#1B6AC9;white-space:nowrap">Solution Explorer</div>
<div class="a" style="left:1428px;top:577px;line-height:18px;color:#1E1E1E;white-space:nowrap">Git Changes</div>
<div class="a" style="left:1504px;top:577px;line-height:18px;color:#1E1E1E;white-space:nowrap">Class View</div>
<div class="a" style="left:1320px;top:603px;width:429px;height:356px;border:1px solid #CCCEDB;background:#F5F5F5"></div>
<div class="a" style="left:1321px;top:604px;width:429px;height:21px;background:#EEEEF2"></div>
<div class="a" style="left:1325px;top:605px;line-height:21px;white-space:nowrap">Properties</div>
<svg class="a" style="left:1386px;top:612px" width="308" height="5"><rect width="308" height="5" fill="url(#gp)"/></svg>
<svg class="a" style="left:1700px;top:606px" width="50" height="16" viewBox="1700 606 50 16"><path d="M1702 611.7h7.5l-3.75 4z" fill="#1E1E1E"/><path d="M1720 609.5h5v5.5h-5zM1718.5 615h8M1722.5 615v5" fill="none" stroke="#1E1E1E" stroke-width="1.2"/><rect x="1720" y="609.5" width="2" height="5.5" fill="#1E1E1E"/><path d="M1734.5 610.5l9 8M1743.5 610.5l-9 8" stroke="#1E1E1E" stroke-width="1.3"/></svg>
<div class="a" style="left:1321px;top:625px;width:429px;height:24px;background:#fff"></div>
<svg class="a" style="left:1738px;top:634px" width="8" height="5"><path d="M1 1h6l-3 3z" fill="#6F6F6F"/></svg>
<div class="a" style="left:1322px;top:649px;width:427px;height:27px;background:#EEEEF2"></div>
<svg class="a" style="left:1320px;top:649px" width="80" height="27" viewBox="1320 649 80 27"><rect x="1347.5" y="651.5" width="22" height="21" fill="#F7F9FC" stroke="#3C8CE6" stroke-width="1"/><rect x="1373" y="653" width="1" height="19" fill="#CCCEDB"/><rect x="1328" y="655" width="5.5" height="5.5" fill="#1E1E1E"/><path d="M1329.2 657.75h3.1M1330.75 656.2v3.1" stroke="#fff" stroke-width="0.9"/><rect x="1328" y="663" width="5.5" height="5.5" fill="#1E1E1E"/><path d="M1329.2 665.75h3.1" stroke="#fff" stroke-width="0.9"/><path d="M1335 655.5h7M1335 657.5h7M1335 659.5h7M1335 663.5h7M1335 665.5h7M1335 667.5h7" stroke="#1E1E1E" stroke-width="1" stroke-dasharray="1.6 0.6"/><rect x="1351" y="655" width="7" height="7" fill="none" stroke="#1E1E1E" stroke-width="1"/><text x="1351.8" y="661" font-family="Liberation Sans" font-size="6.5" font-weight="700" fill="#1E1E1E">A</text><text x="1351.5" y="668.5" font-family="Liberation Sans" font-size="7" font-weight="700" fill="#1E1E1E">Z</text><path d="M1362.5 657v9M1359.8 663.2l2.7 2.8 2.7-2.8" fill="none" stroke="#1B6AC0" stroke-width="1.8"/><path d="M1381.5 667.5l7-7" stroke="#A0A0A0" stroke-width="2.8" stroke-linecap="round"/><path d="M1387.8 661.2c-1.8-3 0-7 3.8-7l-2 2.8 1.8 1.8 2.8-1.8c0 3.8-3.5 5.8-6.4 4.2z" fill="#A0A0A0"/></svg>
<div class="a" style="left:1758px;top:68px;width:85px;height:14px;line-height:14px;font-size:11.6px;white-space:nowrap;transform-origin:0 0;transform:translate(14px,0) rotate(90deg)">Diagnostic Tools</div>
</div>

<!-- ============ STATUS BAR ============ -->
<div class="a" style="left:0;top:967px;width:1777px;height:17px;background:#006CBE"></div>
<svg class="a" style="left:0;top:967px" width="1777" height="17" viewBox="0 967 1777 17"><rect x="3.5" y="971.5" width="13" height="10" fill="#3D8EDB" stroke="#fff" stroke-width="1"/><rect x="5" y="981" width="4" height="3" fill="#fff"/>
<path d="M1425 982v-10M1421 976l4-4 4 4" fill="none" stroke="#fff" stroke-width="1.1"/><path d="M1563 979h8l-4-4z" fill="#fff"/>
<path d="M1594.5 973.5h13M1595.5 975.5h11M1597 976v7M1601 976v7M1605 976v7M1596 973.5v-1.5h11v1.5" fill="none" stroke="#fff" stroke-width="1"/><path d="M1712 979h8l-4-4z" fill="#fff"/>
<path d="M1740.5 981.5c1.5-1 1.5-3 1.5-5c0-3 2-4.5 4.5-4.5s4.5 1.5 4.5 4.5c0 2 0 4 1.5 5z" fill="none" stroke="#fff" stroke-width="1.1"/>
<g fill="#9DBCE0"><rect x="1771" y="981" width="1" height="1"/><rect x="1773" y="979" width="1" height="1"/><rect x="1773" y="981" width="1" height="1"/><rect x="1775" y="977" width="1" height="1"/><rect x="1775" y="979" width="1" height="1"/><rect x="1775" y="981" width="1" height="1"/></g></svg>
<div class="st" style="left:26px;top:971px">Item(s) Saved</div>
<div class="st" style="left:1439px;top:971px">Add to Source Control</div>
<div class="st" style="left:1615px;top:971px">Select Repository</div>

</body></html>
